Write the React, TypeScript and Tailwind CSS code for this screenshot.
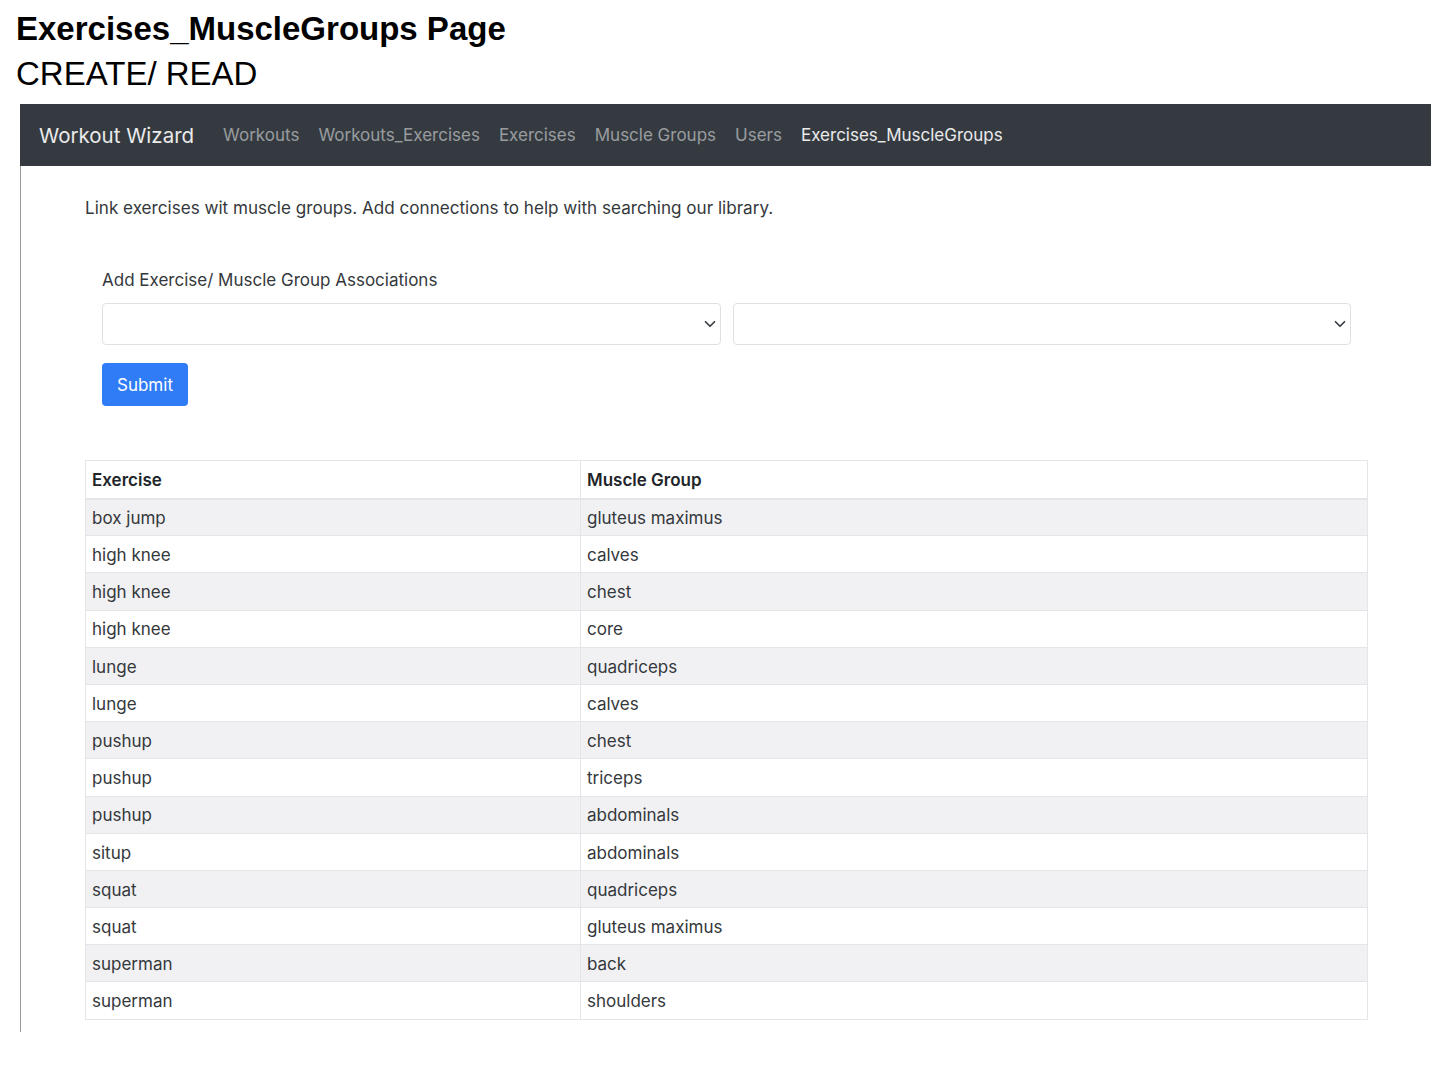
import React from 'react';

const rows: [string, string][] = [
  ['box jump', 'gluteus maximus'],
  ['high knee', 'calves'],
  ['high knee', 'chest'],
  ['high knee', 'core'],
  ['lunge', 'quadriceps'],
  ['lunge', 'calves'],
  ['pushup', 'chest'],
  ['pushup', 'triceps'],
  ['pushup', 'abdominals'],
  ['situp', 'abdominals'],
  ['squat', 'quadriceps'],
  ['squat', 'gluteus maximus'],
  ['superman', 'back'],
  ['superman', 'shoulders'],
];

const navLinks = ['Workouts', 'Workouts_Exercises', 'Exercises', 'Muscle Groups', 'Users'];

const Chevron = () => (
  <svg width="12" height="12" viewBox="0 0 16 16" className="shrink-0">
    <path d="M2 5l6 6 6-6" fill="none" stroke="#343a40" strokeWidth="2.2" strokeLinecap="round" strokeLinejoin="round" />
  </svg>
);

const SelectBox = () => (
  <div className="flex h-[42px] flex-1 items-center justify-end rounded-[4px] border border-[#dfe1e4] bg-white pr-[4px]">
    <Chevron />
  </div>
);

export default function App() {
  return (
    <div className="min-h-[1080px] w-[1438px] bg-white font-['Inter',sans-serif] text-[#212529]">
      {/* Doc heading */}
      <div className="px-[16px] pt-[10px] font-['Liberation_Sans',Arial,sans-serif] text-black">
        <h1 className="h-[38px] text-[33px] font-bold leading-[38px]">Exercises_MuscleGroups Page</h1>
        <p className="h-[50px] text-[33px] leading-[52px]">CREATE/ READ</p>
      </div>

      {/* Screenshot */}
      <div className="ml-[20px] mt-[6px] w-[1411px]">
        <nav className="flex h-[62px] items-center bg-[#343a40] pl-[19px] pt-[2px]">
          <span className="mr-[29px] text-[20.5px] text-white/90">Workout Wizard</span>
          <div className="flex items-center gap-[19px] text-[17px]">
            {navLinks.map((l) => (
              <span key={l} className="text-white/50">{l}</span>
            ))}
            <span className="text-white/90">Exercises_MuscleGroups</span>
          </div>
        </nav>

        <div className="h-[866px] border-l border-[#9a9a9a] pl-[64px] pr-[63px]">
          <p className="pt-[31px] text-[17.1px] leading-[22px] text-[#34383c]">
            Link exercises wit muscle groups. Add connections to help with searching our library.
          </p>

          <div className="px-[17px] pt-[50px]">
            <p className="text-[17px] leading-[22px] text-[#34383c]">Add Exercise/ Muscle Group Associations</p>
            <div className="mt-[12px] flex w-[1249px] gap-[12px]">
              <SelectBox />
              <SelectBox />
            </div>
            <button className="mt-[18px] h-[43px] rounded-[4px] bg-[#2f7cf6] px-[15px] pt-[2px] text-[17px] text-white">
              Submit
            </button>
          </div>

          <table className="mt-[54px] w-[1283px] border-collapse border border-[#e3e5e8] text-[17px]">
            <thead>
              <tr className="h-[38px] border-b-2 border-[#e3e5e8]">
                <th className="w-[495px] border-r border-[#e3e5e8] px-[6px] pt-[2px] text-left font-semibold">Exercise</th>
                <th className="px-[6px] pt-[2px] text-left font-semibold">Muscle Group</th>
              </tr>
            </thead>
            <tbody>
              {rows.map(([ex, mg], i) => (
                <tr key={i} className={`h-[37.2px] border-b border-[#e3e5e8] ${i % 2 === 0 ? 'bg-[#f1f1f3]' : 'bg-white'}`}>
                  <td className="border-r border-[#e3e5e8] px-[6px] pt-[3px] text-[#34383c]">{ex}</td>
                  <td className="px-[6px] pt-[3px] text-[#34383c]">{mg}</td>
                </tr>
              ))}
            </tbody>
          </table>
        </div>
      </div>
    </div>
  );
}
